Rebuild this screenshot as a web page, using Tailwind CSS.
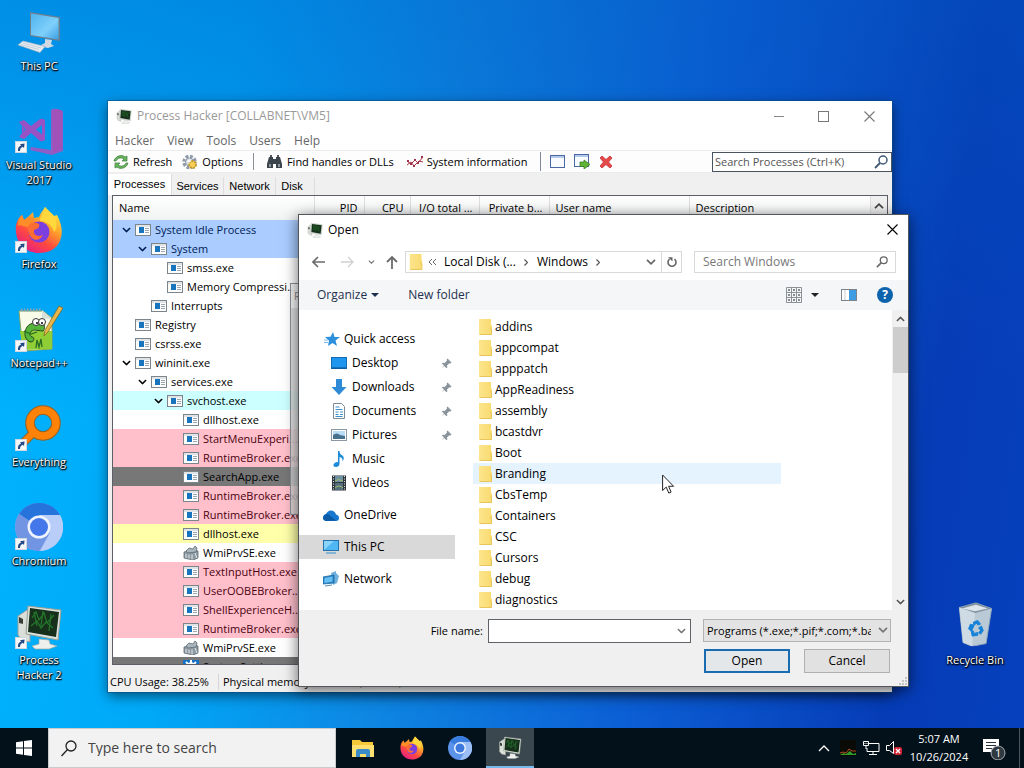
<!DOCTYPE html>
<html lang="en">
<head>
<meta charset="utf-8">
<title>Desktop</title>
<script src="https://cdn.jsdelivr.net/npm/@tailwindcss/browser@4"></script>
</head>
<body class="font-['Open_Sans','Noto_Sans',sans-serif] text-[12px] leading-4 text-black">
<svg class="absolute" width="0" height="0" aria-hidden="true">
  <defs>
    <linearGradient id="gScreen" x1="0" y1="0" x2="1" y2="1"><stop offset="0" stop-color="#4fb4ee"/><stop offset=".6" stop-color="#7fd0fb"/><stop offset="1" stop-color="#3a9fe4"/></linearGradient>
    <linearGradient id="gFox" x1=".85" y1="0" x2=".2" y2="1"><stop offset="0" stop-color="#fff04a"/><stop offset=".35" stop-color="#ffa62b"/><stop offset=".65" stop-color="#ff4a3f"/><stop offset="1" stop-color="#e3178e"/></linearGradient>
    <linearGradient id="gFolder" x1="0" y1="0" x2="1" y2="0"><stop offset="0" stop-color="#fde58c"/><stop offset="1" stop-color="#f8da70"/></linearGradient>
  </defs>
  <symbol id="i-shortcut" viewBox="0 0 12 12"><rect x=".5" y=".5" width="11" height="11" fill="#f4f6f8" stroke="#cfd8e0"/><path d="M3 10C2.6 7 4 5.200 6.200 4.600L5 3.200 9.600 2.400 9 7 7.800 5.800C6 6.600 5 7.600 5 10Z" fill="#234a86"/></symbol>
  <symbol id="i-pc" viewBox="0 0 48 48"><path d="M15 4 45 9v24L15 28Z" fill="#6d808f"/><path d="M16 5.500 43.500 10v21.500L16 27Z" fill="url(#gScreen)"/><path d="M30 31l7 1-1 4 3 2-6 2-9-2 6-3Z" fill="#cfd9e2"/><path d="M8 33l22 5.500-5 6L3 37Z" fill="#e6edf3" stroke="#9fb0be" stroke-width=".7"/><path d="M8 35l18 5M6 36.500l18 5" stroke="#b2c2cf" stroke-width=".7"/></symbol>
  <symbol id="i-vs" viewBox="0 0 48 48"><path d="M36 3q4-3 12 1v40l-11 4-22-5 1-3 20 3V3Z" fill="#8d5fc6"/><path d="M37 4q5-3 10 0v38l-9 4-1-42Z" fill="#a052b8"/><path d="M4 15l5-2 7 6 9-7q2-1 5 1v20q-3 2-5 1l-9-8-7 6-5-2 6-7.500ZM21 22.500l6 5V18ZM7 18.500v8l4-4Z" fill="#9852c4" fill-rule="evenodd"/></symbol>
  <symbol id="i-firefox" viewBox="0 0 48 48"><path d="M1 26C0 18 3 12 7 9l2 5 5-4 4-4 1 6 5-1C26 6 29 3 30 1c3 4 7 6 9 9l3-1c6 12 6 20 2 28-4 7-12 10-20 10C11 47 2 38 1 26Z" fill="url(#gFox)"/><path d="M30 1c-1 6-5 9-5 14 7 0 13 5 14 11 4-4 3-10 0-16Z" fill="#ffd83d"/><circle cx="24" cy="26" r="10.500" fill="#7b3fe0"/><path d="M13 23c0-5 5-8 11-5 1 3-1 5-5 6-1 6 5 7 9 5-4 8-14 6-15-6Z" fill="#ff6d33"/><path d="M7 9l2 5 5-3 5 1c0 4-4 4-6 9-4 0-8-3-10-1C3 15 4 12 7 9Z" fill="#ff8e28"/></symbol>
  <symbol id="i-npp" viewBox="0 0 48 48"><path d="M4 6h24l9 7v31L8 46Z" fill="#f9fbe9" stroke="#8ba35c"/><path d="M5 26h32v18L8 45Z" fill="#8fce34"/><path d="M27 5v8l10 1Z" fill="#d8e0dc"/><path d="M6 5h20" stroke="#90a2b2" stroke-width="3" stroke-dasharray="1.500 1.500"/><path d="M28 17c-5 2-12-1-16 5s-2 14 4 15c3 0 4-5 1-5-3-1-3-6 2-7l9 1q3-3 0-9Z" fill="#55b43a" stroke="#27491c"/><circle cx="21" cy="17" r="3.500" fill="#fff" stroke="#333"/><circle cx="27" cy="17" r="3.500" fill="#fff" stroke="#333"/><circle cx="22" cy="18" r="1"/><circle cx="27" cy="18" r="1"/><path d="M9 26l7 3 6-2M21 43l1-8 2 7 2-8 1 8" fill="none" stroke="#2a6d24" stroke-width="1.300"/><path d="M44 1l4 2-15 24-4 4 1-6Z" fill="#e6b64a" stroke="#786024" stroke-width=".7"/></symbol>
  <symbol id="i-everything" viewBox="0 0 48 48"><circle cx="28" cy="19" r="13" fill="none" stroke="#9a5f1c" stroke-width="9.500"/><path d="M19 28 7 40" stroke="#9a5f1c" stroke-width="8.500"/><circle cx="28" cy="19" r="13" fill="none" stroke="#ff8208" stroke-width="7.500"/><path d="M20 27 6 41" stroke="#ff8208" stroke-width="6.500"/></symbol>
  <symbol id="i-chromium" viewBox="0 0 48 48"><circle cx="24" cy="24" r="24" fill="#85a6ec"/><path d="M24 24 4 11a24 24 0 0 1 41 1Z" fill="#2673db"/><path d="M24 12h21a24 24 0 0 1-20 36l10-18Z" fill="#b9cdf9"/><path d="M4 11a24 24 0 0 0 20 37l9-16Z" fill="#7194e3"/><circle cx="24" cy="24" r="11.500" fill="#edf3ff"/><circle cx="24" cy="24" r="9" fill="#4478ea"/></symbol>
  <symbol id="i-ph" viewBox="0 0 48 48"><path d="M3 14 12 8h3v32l-8-2-4-5Z" fill="#dadfd9" stroke="#989f98"/><path d="M4 15l4 2v5l-4-1Z" fill="#384038"/><path d="M13 4l33 4-3 30-32-6Z" fill="#dde3dc" stroke="#98a096"/><path d="M15 6l29 4-3 25-28-5Z" fill="#17301b"/><path d="M17 16l4-6 3 8 5-7 3 10 7-8M16 24l6-5 4 7 5-6 7 6M19 10l3 14M28 9l-2 15M36 12l-2 17" fill="none" stroke="#23742a" stroke-width="1.300"/><path d="M24 37l10 1 1 4 7 2-8 3H20l-3-3 7-2Z" fill="#edf0ed" stroke="#a3aaa3" stroke-width=".7"/></symbol>
  <symbol id="i-bin" viewBox="0 0 48 48"><path d="M7 6l18-5 17 6-6 38-15 3-10-4Z" fill="#b9c9d6" stroke="#95a9b8"/><path d="M7 6l18-5 17 6-18 5Z" fill="#7f919f"/><path d="M10 7l15-4 13 4-14 3Z" fill="#dfe6eb"/><path d="M24 12l-3 36-10-4L7 6Z" fill="#cfdbe4"/><path d="M22 22l5-2 3 4-3 1-1-2-3 2ZM31 26l2 5-3 4-2-2 2-2-2-3ZM27 36l-6 1-1-5 2-1 1 3 4-1ZM17 29l2-5 4 1-1 3-2 4Z" fill="#1681d8" stroke="#1681d8"/></symbol>
  <symbol id="i-app" viewBox="0 0 16 12"><rect x=".5" y=".5" width="15" height="11" fill="#fdfdfd" stroke="#7c858c"/><path d="M1 2h14" stroke="#dfe3e6" stroke-width="2"/><rect x="4" y="3" width="5" height="6" fill="#1874bd"/><path d="M10 4.500h4M10 6.500h4M10 8.500h4" stroke="#9aa6b0"/></symbol>
  <symbol id="i-wmi" viewBox="0 0 16 14"><path d="M1 6l9-2 5 1v7l-5 2-9-2Z" fill="#8d9aa2" stroke="#5c6a72" stroke-width=".8"/><path d="M3 5l3-3 4 1 2-3 2 2-1 4-8 1Z" fill="#a9b6bd" stroke="#5c6a72" stroke-width=".8"/><path d="M3 8v4M6 8.500v4M9 8.500v5M12 7l2 5" stroke="#e2e7ea"/></symbol>
  <symbol id="i-gearbox" viewBox="0 0 16 14"><rect width="16" height="14" fill="#1270c8"/><circle cx="8" cy="7" r="3.500" fill="none" stroke="#fff" stroke-width="2.500"/><path d="M8 0v3M8 11v3M1 7h3M12 7h3M3 2l2 2M13 2l-2 2M3 12l2-2M13 12l-2-2" stroke="#fff" stroke-width="2"/></symbol>
  <symbol id="i-down" viewBox="0 0 10 6"><path d="M1 .8 5 4.800 9 .8" fill="none" stroke="currentColor" stroke-width="1.700"/></symbol>
  <symbol id="i-up" viewBox="0 0 10 6"><path d="M1 5.200 5 1.200 9 5.200" fill="none" stroke="currentColor" stroke-width="1.700"/></symbol>
  <symbol id="i-close" viewBox="0 0 11 11"><path d="M.5.5l10 10M10.500.5l-10 10" fill="none" stroke="currentColor" stroke-width="1.100"/></symbol>
  <symbol id="i-glass" viewBox="0 0 14 14"><circle cx="9" cy="5" r="4" fill="none" stroke="currentColor" stroke-width="1.500"/><path d="M6 8 1 13" stroke="currentColor" stroke-width="1.800"/></symbol>
  <symbol id="i-folder" viewBox="0 0 13 16"><path d="M0 0h12v6l1 1v9H0Z" fill="url(#gFolder)"/><path d="M1 15.500h11.500V10l-1.500-1" fill="none" stroke="#e8c45c"/></symbol>
  <symbol id="i-pin" viewBox="0 0 11 11"><path d="M6.500.5l4 4-1 1-1-.3L6 7.500l.3 2-.8.8-2.200-2.200L.5 10.500 3 7.500.8 5.500l.8-.8 2 .3L6 2.500l-.4-1Z" fill="#8b949c"/></symbol>
</svg>

<div class="flex h-screen w-full flex-col overflow-hidden">
<main class="relative flex-1 overflow-hidden bg-[linear-gradient(178deg,#0058c066_0%,#0078e000_55%),linear-gradient(98deg,#00b4ff_0%,#00a9f8_22%,#0e86e2_42%,#0c5ed4_65%,#063cb6_88%,#0640bc_100%)]">

  <nav aria-label="Desktop icons" class="flex w-[78px] flex-col text-white [text-shadow:1px_1px_1px_#000,0_1px_2px_#000,0_0_2px_#000]">
    <a href="#" class="flex h-[99px] flex-col items-center pt-2 text-center text-[11px] leading-[15px]"><svg class="mb-[2px] size-12 shrink-0"><use href="#i-pc"/></svg>This PC</a>
    <a href="#" class="flex h-[99px] flex-col items-center pt-2 text-center text-[11px] leading-[15px]"><svg class="mb-[2px] size-12 shrink-0"><use href="#i-vs"/><use href="#i-shortcut" y="34" width="12" height="12"/></svg>Visual Studio 2017</a>
    <a href="#" class="flex h-[99px] flex-col items-center pt-2 text-center text-[11px] leading-[15px]"><svg class="mb-[2px] size-12 shrink-0"><use href="#i-firefox"/><use href="#i-shortcut" y="35" width="12" height="12"/></svg>Firefox</a>
    <a href="#" class="flex h-[99px] flex-col items-center pt-2 text-center text-[11px] leading-[15px]"><svg class="mb-[2px] size-12 shrink-0"><use href="#i-npp"/><use href="#i-shortcut" y="35" width="12" height="12"/></svg>Notepad++</a>
    <a href="#" class="flex h-[99px] flex-col items-center pt-2 text-center text-[11px] leading-[15px]"><svg class="mb-[2px] size-12 shrink-0"><use href="#i-everything"/><use href="#i-shortcut" y="35" width="12" height="12"/></svg>Everything</a>
    <a href="#" class="flex h-[99px] flex-col items-center pt-2 text-center text-[11px] leading-[15px]"><svg class="mb-[2px] size-12 shrink-0"><use href="#i-chromium"/><use href="#i-shortcut" y="35" width="12" height="12"/></svg>Chromium</a>
    <a href="#" class="flex h-[99px] flex-col items-center pt-2 text-center text-[11px] leading-[15px]"><svg class="mb-[2px] size-12 shrink-0"><use href="#i-ph"/><use href="#i-shortcut" y="35" width="12" height="12"/></svg>Process<br>Hacker 2</a>
  </nav>
  <a href="#" class="absolute right-[10px] top-[594px] flex w-[78px] flex-col items-center pt-2 text-center text-[11px] leading-[15px] text-white [text-shadow:1px_1px_1px_#000,0_1px_2px_#000,0_0_2px_#000]"><svg class="mb-[2px] h-12 w-12" viewBox="-2 0 52 52"><use href="#i-bin" width="48" height="48"/></svg>Recycle Bin</a>

  <!-- Process Hacker window -->
  <section aria-label="Process Hacker" class="absolute left-[108px] top-[101px] flex h-[591px] w-[784px] flex-col bg-[#f0f0f0] shadow-[0_0_0_1px_#0a4a8088,0_4px_12px_#0008]">
    <header class="flex h-[30px] items-center bg-white pl-2 text-[#999]">
      <svg class="mr-[5px] h-4 w-4"><use href="#i-ph" width="16" height="16"/></svg>
      <h1 class="flex-1">Process Hacker [COLLABNET\VM5]</h1>
      <button aria-label="Minimize" class="flex h-full w-[45px] items-center justify-center"><span class="w-[10px] border-t border-[#888]"></span></button>
      <button aria-label="Maximize" class="flex h-full w-[45px] items-center justify-center"><span class="size-[11px] border border-[#777]"></span></button>
      <button aria-label="Close" class="flex h-full w-[46px] items-center justify-center"><svg class="size-[11px] text-[#777]"><use href="#i-close"/></svg></button>
    </header>
    <div class="flex h-[19px] items-center gap-[13px] bg-white pl-[7px] text-[#666]">
      <button>Hacker</button><button>View</button><button>Tools</button><button>Users</button><button>Help</button>
    </div>
    <div class="flex h-[23px] items-center border-y border-[#ececec] bg-[#fdfdfd] pl-[5px] text-[11px]">
      <button class="flex items-center"><svg class="mr-1 h-4 w-4" viewBox="0 0 16 16"><path d="M1 7c1-5 8-7 11-4l2-1v5H9l2-2C8 3 4 4 3 7ZM15 9c-1 5-8 7-11 4l-2 1V9h5l-2 2c3 2 7 1 8-2Z" fill="#69b45c" stroke="#3b8040" stroke-width=".7"/></svg>Refresh</button>
      <button class="ml-[10px] flex items-center"><svg class="mr-1 h-4 w-4" viewBox="0 0 16 16"><circle cx="7.500" cy="8" r="5" fill="none" stroke="#8e9aa8" stroke-width="4.500" stroke-dasharray="2.500 1.400"/><circle cx="7.500" cy="8" r="4" fill="#d8dee6" stroke="#93a0ae"/><circle cx="10.500" cy="10.500" r="3.500" fill="#f6d056" stroke="#c39424" stroke-width="1.800" stroke-dasharray="2 1"/><circle cx="7" cy="7" r="1.600" fill="#fff"/></svg>Options</button>
      <span class="ml-[10px] mr-[9px] h-[17px] w-px bg-[#8a9096]"></span>
      <button class="ml-[4px] flex items-center"><svg class="mr-[5px] h-[14px] w-[15px]" viewBox="0 0 15 14"><path d="M2 2h4v2h3V2h4l2 7v4H9V9H6v4H0V9Z" fill="#3d454c"/><path d="M3 0h2v2H3ZM10 0h2v2h-2Z" fill="#555"/><path d="M2 9h2v3H2ZM11 9h2v3h-2Z" fill="#8d979f"/></svg>Find handles or DLLs</button>
      <button class="ml-[13px] flex items-center"><svg class="mr-1 h-4 w-4" viewBox="0 0 16 16"><path d="M0 7l4 3 4-4 3 3 5-6M0 11l4-3 3 4 5-5 4 1" fill="none" stroke="#a33247"/><path d="M0 6h2v2H0ZM3 9h2v2H3ZM7 5h2v2H7ZM10 8h2v2h-2ZM14 2h2v2h-2ZM6 11h2v2H6Z" fill="#a33247"/></svg>System information</button>
      <span class="ml-[13px] mr-[9px] h-[19px] w-px bg-[#7d8b9c]"></span>
      <button aria-label="New window"><svg class="block h-[14px] w-4" viewBox="0 0 16 14"><rect x=".5" y=".5" width="14" height="12" fill="#f8fbff" stroke="#4968a4"/><path d="M1 2h13" stroke="#b5c9e8" stroke-width="2"/></svg></button>
      <button aria-label="Go to window" class="ml-2"><svg class="block h-[15px] w-4" viewBox="0 0 16 15"><rect x=".5" y=".5" width="14" height="12" fill="#f8fbff" stroke="#4968a4"/><path d="M1 2h13" stroke="#b5c9e8" stroke-width="2"/><path d="M6 8h4V6l6 4.500L10 15v-2.500H6Z" fill="#61b336" stroke="#397e24" stroke-width=".8"/></svg></button>
      <button aria-label="Terminate" class="ml-[9px]"><svg class="block h-[14px] w-[14px]" viewBox="0 0 14 14"><path d="M1 3l2-2 4 3.500L11 1l2 2-3.500 4L13 11l-2 2-4-3.500L3 13l-2-2 3.500-4Z" fill="#e44a4a" stroke="#c72f35" stroke-width=".8"/></svg></button>
      <label class="ml-auto flex h-[20px] w-[180px] items-center border border-[#4a5560] bg-white pl-[2px] pr-[3px]"><input aria-label="Search processes" placeholder="Search Processes (Ctrl+K)" class="min-w-0 flex-1 outline-none placeholder:text-[#555]"><svg class="size-[14px] text-[#3f5872]"><use href="#i-glass"/></svg></label>
    </div>
    <div role="tablist" class="flex h-[22px] items-end font-['Liberation_Sans',sans-serif] text-[11px]">
      <button role="tab" class="h-[21px] w-[64px] border-r border-[#ddd] bg-white pb-[2px]">Processes</button>
      <button role="tab" class="h-[18px] w-[52px] border-r border-[#ddd] pb-px">Services</button>
      <button role="tab" class="h-[18px] w-[52px] border-r border-[#ddd] pb-px">Network</button>
      <button role="tab" class="h-[18px] w-[32px] pb-px">Disk</button>
      <span class="ml-[6px] h-[18px] w-px bg-[#ddd]"></span>
    </div>
    <div class="mx-1 flex h-[470px] overflow-hidden border border-[#5c6066] bg-white text-[11px]">
      <div class="min-w-0 flex-1 overflow-hidden">
      <table class="w-full table-fixed border-collapse">
        <thead><tr class="h-6 bg-linear-to-b from-white to-[#f1f2f3] [&>th]:border-r [&>th]:border-[#dedede] [&>th]:px-[6px] [&>th]:font-normal">
          <th class="w-[201px] text-left">Name</th><th class="w-[50px] text-right">PID</th><th class="w-[46px] text-right">CPU</th><th class="w-[69px] whitespace-nowrap text-right">I/O total ...</th><th class="w-[70px] whitespace-nowrap text-right">Private b...</th><th class="w-[140px] text-left">User name</th><th class="text-left">Description</th>
        </tr></thead>
        <tbody id="procs"></tbody>
      </table>
      </div>
      <div class="w-4 bg-[#f0f0f0]"><button aria-label="Scroll up" class="flex h-[19px] w-4 items-center justify-center text-[#444]"><svg class="h-[6px] w-[10px]"><use href="#i-up"/></svg></button></div>
    </div>
    <footer class="mt-auto flex h-[21px] items-center pl-[2px] text-[11px]">
      <span class="w-[109px] border-r border-[#d5d5d5]">CPU Usage: 38.25%</span><span class="pl-1">Physical memory: 1.72 GB (43.11%)</span>
    </footer>
  </section>

  <!-- edge of a fading dialog behind the Open dialog -->
  <div class="absolute left-[290px] top-[283px] h-[232px] w-6 border border-[#8a9096] bg-[linear-gradient(#f4f4f4e0_24px,#d8d8d8d0_24px)] pl-[3px] pt-[6px] text-[10px] leading-3 text-[#888]">R</div>

  <!-- Open dialog -->
  <section role="dialog" aria-label="Open" class="absolute left-[298px] top-[214px] flex h-[473px] w-[611px] flex-col border border-[#53575c] bg-white shadow-[0_3px_14px_#0009]">
    <header class="flex h-[29px] items-center pl-2">
      <svg class="mr-[5px] h-4 w-4"><use href="#i-ph" width="16" height="16"/></svg>
      <h2 class="flex-1">Open</h2>
      <button aria-label="Close" class="flex h-full w-[31px] items-center justify-center"><svg class="size-[11px]"><use href="#i-close"/></svg></button>
    </header>
    <div class="flex h-[36px] items-center pl-[13px] pr-3">
      <button aria-label="Back"><svg class="block h-3 w-[13px]" viewBox="0 0 13 12"><path d="M6 1 1 6l5 5M1 6h12" fill="none" stroke="#6b6b6b" stroke-width="1.700"/></svg></button>
      <button aria-label="Forward" class="ml-[16px]"><svg class="block h-3 w-[13px]" viewBox="0 0 13 12"><path d="M7 1l5 5-5 5M12 6H0" fill="none" stroke="#d0d0d0" stroke-width="1.300"/></svg></button>
      <button aria-label="Recent locations" class="ml-[14px]"><svg class="block h-1 w-[7px] text-[#777]" viewBox="0 0 10 6"><use href="#i-down"/></svg></button>
      <button aria-label="Up" class="ml-[11px]"><svg class="block h-[13px] w-3" viewBox="0 0 12 13"><path d="M1 6l5-5 5 5M6 1v12" fill="none" stroke="#6b6b6b" stroke-width="1.800"/></svg></button>
      <div class="ml-[7px] flex h-[22px] w-[277px] items-center border border-[#d9d9d9] pl-[3px]">
        <svg class="h-4 w-[14px]" viewBox="0 0 13 16"><use href="#i-folder"/></svg>
        <svg class="ml-[5px] h-2 w-[9px] text-[#666]" viewBox="0 0 9 8"><path d="M4 1 1 4l3 3M8 1 5 4l3 3" fill="none" stroke="currentColor"/></svg>
        <button class="ml-[7px] whitespace-nowrap">Local Disk (...</button>
        <svg class="ml-[8px] h-[7px] w-1" viewBox="0 0 4 7"><path d="M.5.5l3 3-3 3" fill="none" stroke="#555" stroke-width="1.200"/></svg>
        <button class="ml-[9px]">Windows</button>
        <svg class="ml-[8px] h-[7px] w-1" viewBox="0 0 4 7"><path d="M.5.5l3 3-3 3" fill="none" stroke="#555" stroke-width="1.200"/></svg>
        <button aria-label="Previous locations" class="ml-auto mr-[5px]"><svg class="block h-[6px] w-[10px] text-[#666]"><use href="#i-down"/></svg></button>
        <button aria-label="Refresh" class="flex h-full w-[20px] items-center justify-center border-l border-[#d9d9d9]"><svg class="h-[11px] w-[10px]" viewBox="0 0 10 11"><path d="M7.500 2.200a4 4 0 1 1-5 0" fill="none" stroke="#666" stroke-width="1.600"/><path d="M1 .3h4.500V4.500Z" fill="#666"/></svg></button>
      </div>
      <label class="ml-3 flex h-[22px] min-w-0 flex-1 items-center border border-[#d9d9d9] pl-2 pr-[7px]"><input aria-label="Search Windows" placeholder="Search Windows" class="min-w-0 flex-1 outline-none placeholder:text-[#777]"><svg class="size-3 text-[#666]" viewBox="0 0 14 14"><use href="#i-glass"/></svg></label>
    </div>
    <div class="flex h-[30px] items-center bg-[#f5f6f7] pl-[18px] pr-[15px] text-[#1e3050]">
      <button class="flex items-center gap-[4px]">Organize<svg class="h-1 w-2" viewBox="0 0 8 4"><path d="M0 0h8L4 4Z" fill="currentColor"/></svg></button>
      <button class="ml-[29px]">New folder</button>
      <button aria-label="View" class="ml-auto"><svg class="block size-4" viewBox="0 0 16 16"><path d="M.5.5h15v15H.5ZM5.500 0v16M10.500 0v16M0 5.500h16M0 10.500h16" fill="none" stroke="#8c9196"/><path d="M2 3h2M7 3h2M12 3h2M2 8h2M7 8h2M12 8h2M2 13h2M7 13h2M12 13h2" stroke="#60686e" stroke-width="1.500"/></svg></button>
      <button aria-label="More views" class="ml-[9px]"><svg class="block h-1 w-2" viewBox="0 0 8 4"><path d="M0 0h8L4 4Z" fill="#222"/></svg></button>
      <button aria-label="Preview pane" class="ml-[22px]"><svg class="block h-3 w-4" viewBox="0 0 16 12"><rect x=".5" y=".5" width="15" height="11" fill="#fff" stroke="#7b848c"/><rect x="8" y="1" width="7" height="10" fill="#3f9ce3"/><path d="M4 1v10" stroke="#ccc"/></svg></button>
      <button aria-label="Help" class="ml-[20px] flex size-4 items-center justify-center rounded-full bg-[#0d64ad] font-bold text-white">?</button>
    </div>
    <div class="flex h-[300px] overflow-hidden">
      <nav aria-label="Places" class="w-[156px] pt-[17px] [&>a]:flex [&>a]:h-6 [&>a]:items-center">
        <a href="#" class="pl-[25px]"><svg class="mr-1 size-4" viewBox="0 0 16 16"><path d="M9 1l1.500 5H16l-4.500 3.500 1.500 5.500L8.500 12 4 15l1-5.500L1 6l5.500-.3Z" fill="#2b8fdc"/><path d="M0 9h4M0 11.500h4" stroke="#79bdef"/></svg>Quick access</a>
        <a href="#" class="pl-8"><svg class="mr-[5px] h-3 w-4" viewBox="0 0 16 12"><rect x=".5" y=".5" width="15" height="11" fill="#1f96ee" stroke="#126cb4"/><path d="M1 11h14" stroke="#0a4f8c"/></svg>Desktop<svg class="ml-auto mr-[3px] size-[11px]"><use href="#i-pin"/></svg></a>
        <a href="#" class="pl-8"><svg class="mr-[5px] size-4" viewBox="0 0 16 16"><path d="M5 0h6v8h4.500L8 16 .5 8H5Z" fill="#2f8bd8"/></svg>Downloads<svg class="ml-auto mr-[3px] size-[11px]"><use href="#i-pin"/></svg></a>
        <a href="#" class="pl-8"><svg class="mr-[5px] size-4" viewBox="0 0 16 16"><path d="M2.500.5h8l3 3v12h-11Z" fill="#fff" stroke="#7d8c98"/><path d="M4.500 4h4M4.500 6.500h7M4.500 9h3M9 9h3M4.500 11.500h3M9 11.500h3M4.500 13.500h7" stroke="#3d8fc9"/></svg>Documents<svg class="ml-auto mr-[3px] size-[11px]"><use href="#i-pin"/></svg></a>
        <a href="#" class="pl-8"><svg class="mr-[5px] h-3 w-4" viewBox="0 0 16 12"><rect x=".5" y=".5" width="15" height="11" fill="#fff" stroke="#8b98a3"/><rect x="2" y="2" width="12" height="8" fill="#b9ddf4"/><path d="M2 6q4-3 7 0l5 1v3H2Z" fill="#47718e"/></svg>Pictures<svg class="ml-auto mr-[3px] size-[11px]"><use href="#i-pin"/></svg></a>
        <a href="#" class="pl-8"><svg class="mr-[5px] size-4" viewBox="0 0 16 16"><path d="M7 0h1.500q0 3 3 4.500Q14 7 11.500 10.500q.5-4-3-4.500v7q-.5 3-3.500 3t-2.500-2.500Q3.500 10.500 7 11Z" fill="#1e8cd8"/></svg>Music</a>
        <a href="#" class="pl-8"><svg class="mr-[5px] size-4" viewBox="0 0 16 16"><rect x="1" y=".5" width="14" height="15" fill="#2f363c"/><rect x="4" y="1" width="8" height="6" fill="#6d93a3"/><rect x="4" y="8" width="8" height="7" fill="#536f7e"/><path d="M2.500 1v14M13.500 1v14" stroke="#dfe4e8" stroke-dasharray="1 1.500"/><path d="M4 6q3-3 8 0M4 13q4-4 8 0" stroke="#a5b766" fill="none"/></svg>Videos</a>
        <a href="#" class="mt-2 pl-6"><svg class="mr-[5px] h-[11px] w-4" viewBox="0 0 16 11"><path d="M3 11Q0 10 0 7.500T3 4Q5 0 8.500.500t4.500 4Q16 5 16 8t-3 3Z" fill="#1678cf"/><path d="M0 7.500Q1 4 5 4l8 6.500-10 .5Q0 10 0 7.500Z" fill="#0a5aa6"/></svg>OneDrive</a>
        <a href="#" class="mt-2 bg-[#d9d9d9] pl-6"><svg class="mr-[5px] h-[14px] w-4" viewBox="0 0 16 14"><rect x=".5" y=".5" width="15" height="10" fill="#4fb7f4" stroke="#2372ad"/><path d="M1 10 11 1H1Z" fill="#8ad4fb"/><path d="M3 13h10" stroke="#68a8d4" stroke-width="1.500"/></svg>This PC</a>
        <a href="#" class="mt-2 pl-6"><svg class="mr-[5px] size-4" viewBox="0 0 16 16"><path d="M8 2l5-2v2l3 3-2 7-4 2Z" fill="#6fb0dc"/><path d="M0 6l11-2v8L0 13Z" fill="#2887cc" stroke="#1c679f" stroke-width=".8"/><path d="M1.500 7l8-1.500v5L1.500 12Z" fill="#68c0f2"/><path d="M2 15l7-1" stroke="#548eb5"/></svg>Network</a>
      </nav>
      <div id="files" class="min-w-0 flex-1 pl-[18px] pt-[6px]"></div>
      <div class="flex w-4 flex-col items-center bg-[#f0f0f0] text-[#555]">
        <button aria-label="Scroll up" class="flex h-[17px] w-full items-center justify-center"><svg class="h-[6px] w-[9px]" viewBox="0 0 10 6"><use href="#i-up"/></svg></button>
        <div class="h-[46px] w-[15px] bg-[#cdcdcd]"></div>
        <button aria-label="Scroll down" class="mt-auto flex h-[17px] w-full items-center justify-center"><svg class="h-[6px] w-[9px]" viewBox="0 0 10 6"><use href="#i-down"/></svg></button>
      </div>
    </div>
    <footer class="relative flex-1 bg-[#f0f0f0] pr-[17px] pt-[9px]">
      <div class="flex items-start justify-end">
        <label for="fname" class="pr-[5px] pt-1 text-[11px]">File name:</label>
        <div class="flex h-6 w-[203px] items-center border border-[#5f6368] bg-white pr-1"><input id="fname" class="min-w-0 flex-1 px-1 outline-none"><button aria-label="File name history"><svg class="block h-[6px] w-[9px] text-[#777]" viewBox="0 0 10 6"><use href="#i-down"/></svg></button></div>
        <div class="relative ml-3 w-[188px]"><select aria-label="File type" class="block h-[23px] w-full appearance-none border border-[#b2b2b2] bg-[#e3e3e3] pl-[3px] pr-[19px] text-[11px]"><option>Programs (*.exe;*.pif;*.com;*.bat)</option></select><svg class="pointer-events-none absolute right-[3px] top-2 h-[6px] w-[10px] text-[#777]"><use href="#i-down"/></svg></div>
      </div>
      <div class="mr-px mt-[6px] flex justify-end gap-[14px]">
        <button class="h-6 w-[86px] border-2 border-[#1a6cb0] bg-[#e3e7ea]">Open</button>
        <button class="h-6 w-[86px] border border-[#b0b0b0] bg-[#e1e1e1]">Cancel</button>
      </div>
      <svg class="absolute bottom-0 right-0 h-[10px] w-[10px]" viewBox="0 0 10 10"><path d="M7 1h2v2H7ZM7 4h2v2H7ZM4 4h2v2H4ZM7 7h2v2H7ZM4 7h2v2H4ZM1 7h2v2H1Z" fill="#c4c4c4"/></svg>
    </footer>
  </section>
  <svg class="absolute left-[662px] top-[474px] h-[20px] w-[13px]" viewBox="0 0 13 20"><path d="M.6 1v15.500l3.600-3.400 2.600 6 2.300-1-2.500-5.800h5Z" fill="#fff" stroke="#222"/></svg>
</main>

<footer class="flex h-10 shrink-0 items-center bg-[#03111b] text-white">
  <button aria-label="Start" class="flex h-full w-12 items-center justify-center"><svg class="size-4" viewBox="0 0 16 16"><path d="M0 2.200 7 1.200v6.300H0ZM8 1l8-1v7.500H8ZM0 8.500h7v6.300l-7-1ZM8 8.500h8V16l-8-1.100Z" fill="#fff"/></svg></button>
  <label class="flex h-full w-[288px] items-center border border-[#c8cbcd] bg-[#f2f2f2] pl-3"><svg class="mr-[11px] h-[17px] w-4" viewBox="0 0 16 17"><circle cx="10" cy="6" r="5" fill="none" stroke="#222" stroke-width="1.300"/><path d="M6.500 9.500.5 16" stroke="#222" stroke-width="1.300"/></svg><input aria-label="Type here to search" placeholder="Type here to search" class="min-w-0 flex-1 text-[14px] outline-none placeholder:text-[#444]"></label>
  <button aria-label="File Explorer" class="ml-[3px] flex h-full w-12 items-center justify-center"><svg class="h-[18px] w-[22px]" viewBox="0 0 22 18"><path d="M0 1h8l2 2h11v15H0Z" fill="#f5c83a"/><path d="M0 6h22v12H0Z" fill="#fde070"/><path d="M4 18v-6q0-2 2-2h10q2 0 2 2v6h-4v-3H8v3Z" fill="#3b8dc9"/></svg></button>
  <button aria-label="Firefox" class="ml-[1px] flex h-full w-12 items-center justify-center"><svg class="size-6" viewBox="0 0 48 48"><use href="#i-firefox"/></svg></button>
  <button aria-label="Chromium" class="flex h-full w-12 items-center justify-center"><svg class="size-6" viewBox="0 0 24 24"><circle cx="12" cy="12" r="12" fill="#5c93ea"/><path d="M12 12 2 5.500a12 12 0 0 1 20.500.5Z" fill="#397ce0"/><path d="M12 6h10.500A12 12 0 0 1 12 24l5-9Z" fill="#9dbff8"/><circle cx="12" cy="12" r="6" fill="#eef4ff"/><circle cx="12" cy="12" r="4.500" fill="#3d79dd"/></svg></button>
  <button aria-label="Process Hacker" class="ml-[2px] flex h-full w-12 items-center justify-center border-b-2 border-[#76b9ed] bg-[#3b474f]"><svg class="size-6" viewBox="0 0 48 48"><use href="#i-ph"/></svg></button>
  <div class="ml-auto flex h-full items-center">
    <button aria-label="Hidden icons"><svg class="block h-[7px] w-3" viewBox="0 0 12 7"><path d="M1 6l5-5 5 5" fill="none" stroke="#fff" stroke-width="1.300"/></svg></button>
    <svg class="ml-[10px] size-4" viewBox="0 0 16 16"><rect width="16" height="16" fill="#0a0a06"/><path d="M0 13l3-1 3 1 3-4 3 2 4 0" fill="none" stroke="#b04a1a"/><path d="M0 15q3-3 6-1l4-3 3 3 3-1v2Z" fill="#2f9c2c"/></svg>
    <svg class="ml-[7px] h-[14px] w-[17px]" viewBox="0 0 17 14"><path d="M6 2.500h10v8H4V7M10 10v3M6 13.500h8M.5.500h5v4h-5ZM3 5v3M2 2v1M4 2v1" fill="none" stroke="#fff"/></svg>
    <svg class="ml-[6px] h-4 w-[18px]" viewBox="0 0 18 16"><path d="M.5 5.500h3l4-4v12l-4-3h-3Z" fill="none" stroke="#fff"/><rect x="8" y="7" width="8" height="8" rx="2" fill="#cf2436"/><path d="M10 9l4 4M14 9l-4 4" stroke="#fff" stroke-width="1.300"/></svg>
    <time class="ml-[4px] w-[62px] whitespace-nowrap text-center text-[11px] leading-[18px]">5:07 AM<br>10/26/2024</time>
    <button aria-label="Notifications" class="ml-3"><svg class="block h-6 w-6" viewBox="0 0 24 24"><path d="M1 3h16v13h-5l-3 3v-3H1Z" fill="#fff"/><path d="M4 6.500h10M4 9.500h10M4 12.500h6" stroke="#26343e"/><circle cx="16" cy="17" r="7" fill="#303940" stroke="#a6abb0"/><text x="13" y="21" fill="#fff" font-size="11" font-family="Open Sans">1</text></svg></button>
    <span class="ml-[13px] mr-1 h-full w-px bg-[#4a555d]"></span>
  </div>
</footer>
</div>
<script>
// [name, indent level, expandable, row style, icon]
const plain = '', blue = 'bg-[#aaccff] text-[#001c55]', cyan = 'bg-[#ccffff]', pink = 'bg-[#ffc0cb] text-[#4a0010]', gray = 'bg-[#777777]', yellow = 'bg-[#ffffaa]';
const rows = [
  ['System Idle Process',0,1,blue],['System',1,1,blue],['smss.exe',2,0,plain],['Memory Compressi...',2,0,plain],['Interrupts',1,0,plain],
  ['Registry',0,0,plain],['csrss.exe',0,0,plain],['wininit.exe',0,1,plain],['services.exe',1,1,plain],['svchost.exe',2,1,cyan],
  ['dllhost.exe',3,0,plain],['StartMenuExperi...',3,0,pink],['RuntimeBroker.exe',3,0,pink],['SearchApp.exe',3,0,gray],['RuntimeBroker.exe',3,0,pink],
  ['RuntimeBroker.exe',3,0,pink],['dllhost.exe',3,0,yellow],['WmiPrvSE.exe',3,0,plain,'wmi'],['TextInputHost.exe',3,0,pink],['UserOOBEBroker...',3,0,pink],
  ['ShellExperienceH...',3,0,pink],['RuntimeBroker.exe',3,0,pink],['WmiPrvSE.exe',3,0,plain,'wmi'],['SystemSettings....',3,0,gray,'gearbox']];
const pads = ['pl-[9px]','pl-[25px]','pl-[41px]','pl-[57px]'];
document.getElementById('procs').innerHTML = rows.map(([n,l,e,c,i]) =>
  `<tr class="${c}"><td colspan="7" class="p-0"><div class="flex h-[19px] items-center whitespace-nowrap ${pads[l]}">` +
  `<svg class="mr-[4px] h-[6px] w-[9px]" viewBox="0 0 10 6">${e ? '<use href="#i-down"/>' : ''}</svg>` +
  `<svg class="mr-[4px] h-[14px] w-4" viewBox="0 0 16 ${i ? 14 : 12}"><use href="#i-${i || 'app'}"/></svg>${n}</div></td></tr>`).join('');
document.getElementById('files').innerHTML = ['addins','appcompat','apppatch','AppReadiness','assembly','bcastdvr','Boot','Branding','CbsTemp','Containers','CSC','Cursors','debug','diagnostics'].map(n =>
  `<button class="flex h-[21px] w-[308px] items-center pl-[6px] ${n === 'Branding' ? 'bg-[#e5f3ff]' : ''}"><svg class="mr-[3px] h-4 w-[13px]"><use href="#i-folder"/></svg>${n}</button>`).join('');
</script>
</body>
</html>
